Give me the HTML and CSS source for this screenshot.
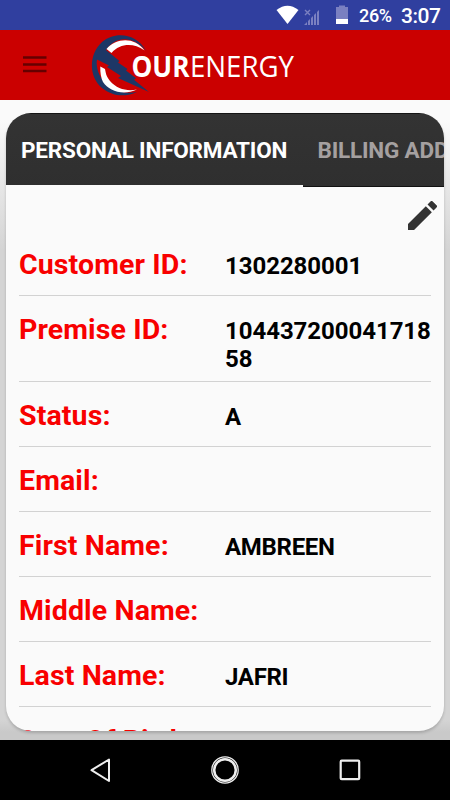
FILE: index.html
```html
<!DOCTYPE html>
<html lang="en">
<head>
<meta charset="utf-8">
<title>Our Energy</title>
<link rel="stylesheet" href="styles.css">
</head>
<body>
<div class="screen">
  <header class="status">
    <svg class="status-icons" viewBox="0 0 100 30" aria-hidden="true">
      <path d="M0.500 10Q11.500 1.500 22.500 10L11.500 24Z" fill="#fff"/>
      <g fill="#7a80c1"><path d="M28 25l3-3v3zM32 25v-4l2-2v6zM35 25v-7l2-2v9zM38 25V15l2-2v12zM41 25V12l2-2v15z"/></g>
      <path d="M29 10l5 5M34 10l-5 5" stroke="#7a80c1" stroke-width="1.400"/>
      <path d="M60 7h3V5.500h6V7h3v12H60z" fill="#7a80c1"/>
      <path d="M60 19h12v5H60z" fill="#fff"/>
    </svg>
    <span class="battery">26%</span>
    <span class="clock">3:07</span>
  </header>
  <div class="appbar">
    <svg class="menu" viewBox="0 0 24 18"><path d="M0 1.500h23.500M0 8.500h23.500M0 15h23.500" stroke="#650000" stroke-width="2.400"/></svg>
    <svg class="logo" viewBox="90 30 210 70">
      <path d="M146 50.500C136 33 115 31 102 42C89 54 88 76 102 88C113 97 126 97 137 92C121 95 106 88 100 76C96 68 96 61 98 57L106 50C116 35 133 36 146 50.500Z" fill="#1d3766"/>
      <path d="M106.500 49C116 37.500 135 36.500 144.500 50.500C133 42.500 120 43.500 111.500 53Z" fill="#fff"/>
      <path d="M100.300 66.500L105 69C106 75 107 77 110 81C117 89 127 91.500 137 89.500C123 96 109 91 103 82Q100 76 100.300 66.500Z" fill="#fff"/>
      <path d="M101 46L119.500 61L118 62.500L127.500 69L126 70.500L136 78.300L134 79.700L149 92L118 78L121 76L107 67L109 65.500L96 59Z" fill="#1d3766"/>
      <text class="our" x="131.500" y="76.500" textLength="58" lengthAdjust="spacingAndGlyphs">OUR</text>
      <text class="energy" x="190" y="76.500" textLength="104" lengthAdjust="spacingAndGlyphs">ENERGY</text>
    </svg>
  </div>
  <main class="content">
    <section class="card">
      <nav class="tabs">
        <div class="tab active"><span>PERSONAL INFORMATION</span></div>
        <div class="tab"><span>BILLING ADDRESS</span></div>
      </nav>
      <div class="tools">
        <svg class="pencil" viewBox="3 2.990 18.010 18.010"><path fill="#333" d="M3 17.250V21h3.750L17.810 9.940l-3.750-3.750L3 17.250zM20.710 7.040a1 1 0 0 0 0-1.410l-2.340-2.340a1 1 0 0 0-1.410 0l-1.830 1.830 3.750 3.750 1.830-1.830z"/></svg>
      </div>
      <dl class="fields">
        <div class="row"><dt>Customer ID:</dt><dd>1302280001</dd></div>
        <div class="row"><dt>Premise ID:</dt><dd>10443720004171858</dd></div>
        <div class="row"><dt>Status:</dt><dd class="name">A</dd></div>
        <div class="row"><dt>Email:</dt><dd></dd></div>
        <div class="row"><dt>First Name:</dt><dd class="name">AMBREEN</dd></div>
        <div class="row"><dt>Middle Name:</dt><dd></dd></div>
        <div class="row"><dt>Last Name:</dt><dd class="name">JAFRI</dd></div>
        <div class="row"><dt>Date Of Birth:</dt><dd></dd></div>
      </dl>
    </section>
  </main>
  <footer class="navbar">
    <svg viewBox="0 0 30 30"><path d="M24 4.500v21.500L6.500 15.200z" fill="none" stroke="#eee" stroke-width="2" stroke-linejoin="round"/></svg>
    <svg viewBox="0 0 30 30"><circle cx="15" cy="15" r="13.200" fill="none" stroke="#eee" stroke-width="1.300"/><circle cx="15" cy="15" r="10.800" fill="none" stroke="#eee" stroke-width="2.500"/></svg>
    <svg viewBox="0 0 30 30"><rect x="5.700" y="5.700" width="18.500" height="18.500" rx="1" fill="none" stroke="#eee" stroke-width="2.200"/></svg>
  </footer>
</div>
</body>
</html>
```

FILE: styles.css
```css
* { box-sizing: border-box; }
body { margin: 0; font-family: Roboto, sans-serif; background: #fafafa; }
.screen { width: 450px; height: 800px; display: flex; flex-direction: column; overflow: hidden; }
.status { height: 29.5px; flex: none; background: #303f9f; color: #fff; display: flex; align-items: center; justify-content: flex-end; padding-right: 10px; line-height: 30px; }
.status-icons { width: 100px; height: 30px; margin-right: -16px; }
.battery { width: 33px; margin-left: -1px; font-size: 18px; font-weight: 500; white-space: nowrap; letter-spacing: -.3px; padding-top: 2px; }
.clock { width: 39px; margin-left: 9px; font-size: 21px; font-weight: 500; white-space: nowrap; letter-spacing: -.5px; padding-top: 2px; }
.appbar { height: 70.5px; flex: none; background: #cb0000; display: flex; align-items: center; padding-left: 23px; }
.menu { width: 24px; height: 18px; margin-right: 43px; }
.logo { width: 210px; height: 70px; }
.logo text { font-family: "Open Sans", sans-serif; font-size: 29px; fill: #fff; }
.logo .our { font-weight: 700; }
.logo .energy { font-weight: 400; }
.content { height: 640px; flex: none; padding: 12.5px 6px 9px; background: linear-gradient(#fafafa 20px, #d4d4d4 150px, #d4d4d4 620px, #c9c9c9 632px); overflow: hidden; }
.card { width: 438px; height: 618.5px; border-radius: 25px; overflow: hidden; background: #fafafa; box-shadow: 0 2px 3px rgba(0, 0, 0, .18); }
.tabs { display: flex; height: 74px; background: linear-gradient(#333, #2f2f2f); border-top: 1px solid #151515; }
.tab { flex: none; height: 73px; padding: 0 14.5px; border-bottom: 1.5px solid #111; color: #a5a0a0; font-size: 22.5px; font-weight: 700; line-height: 73px; white-space: nowrap; letter-spacing: -.2px; }
.tab.active { width: 297px; padding-left: 15px; border-bottom: 2px solid #fafafa; color: #fff; }
.tools { height: 44.5px; padding: 14px 7px 0; display: flex; justify-content: flex-end; }
.pencil { width: 29px; height: 29px; }
.fields { margin: 0 13px; }
.row { display: flex; min-height: 65px; padding-top: 16px; border-bottom: 1px solid #d2d2d2; }
.row dt { flex: none; width: 206px; font-size: 28.5px; line-height: 35px; font-weight: 700; color: #f80000; letter-spacing: .12px; }
.row dd { width: 207px; margin: 5px -2px 8px 0; font-size: 24px; line-height: 28px; font-weight: 700; color: #000; word-break: break-all; letter-spacing: -.05px; }
.row .name { letter-spacing: -.3px; }
.navbar { flex: none; height: 60px; background: #000; display: flex; justify-content: center; align-items: center; gap: 95px; }
.navbar svg { width: 30px; height: 30px; }
```
